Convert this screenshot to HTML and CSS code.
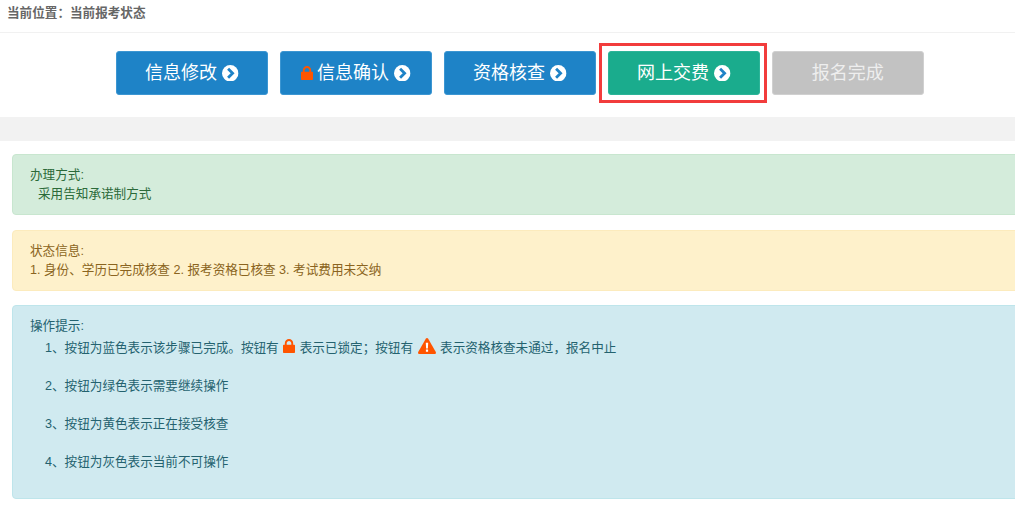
FILE: index.html
```html
<!DOCTYPE html>
<html lang="zh">
<head>
<meta charset="utf-8">
<title>当前报考状态</title>
<link rel="stylesheet" href="styles.css">
</head>
<body>
<svg class="defs" width="0" height="0" aria-hidden="true">
  <symbol id="go" viewBox="0 0 16 16">
    <circle cx="8" cy="8" r="8" fill="#fff"/>
    <path class="chev" d="M5.9 3.6 10.3 8 5.9 12.4" fill="none" stroke-width="2.7"/>
  </symbol>
  <symbol id="lock" viewBox="0 0 12 14">
    <path d="M0 6.4C0 6 .3 5.7.7 5.7H1.8V4.2C1.8 1.9 3.7 0 6 0S10.2 1.9 10.2 4.2V5.7H11.3C11.7 5.7 12 6 12 6.4V13.3C12 13.7 11.7 14 11.3 14H.7C.3 14 0 13.7 0 13.3ZM3.7 5.7H8.3V4.2C8.3 2.9 7.3 1.9 6 1.9S3.7 2.9 3.7 4.2Z" fill="#ff5500" fill-rule="evenodd"/>
  </symbol>
  <symbol id="warn" viewBox="0 0 18 16">
    <path d="M9 0C9.5 0 9.9.3 10.2.7L17.8 14C18.2 14.9 17.7 16 16.6 16H1.4C.3 16-.2 14.9.2 14L7.8.7C8.1.3 8.5 0 9 0Z" fill="#ff5500"/>
    <path d="M7.8 4.8H10.2L9.9 10.4H8.1ZM7.9 11.6H10.1V13.8H7.9Z" fill="#fff"/>
  </symbol>
</svg>

<header class="crumb">当前位置：当前报考状态</header>

<nav class="steps">
  <a class="step step-blue">信息修改<svg class="go"><use href="#go"/></svg></a>
  <a class="step step-blue"><svg class="lock"><use href="#lock"/></svg>信息确认<svg class="go"><use href="#go"/></svg></a>
  <a class="step step-blue">资格核查<svg class="go"><use href="#go"/></svg></a>
  <a class="step step-green step-current">网上交费<svg class="go"><use href="#go"/></svg></a>
  <a class="step step-grey">报名完成</a>
</nav>

<div class="band"></div>

<main class="alerts">
  <section class="alert alert-green">
    <p>办理方式:</p>
    <p class="second indent-small">采用告知承诺制方式</p>
  </section>
  <section class="alert alert-yellow">
    <p>状态信息:</p>
    <p class="second">1. 身份、学历已完成核查 2. 报考资格已核查 3. 考试费用未交纳</p>
  </section>
  <section class="alert alert-blue">
    <p>操作提示:</p>
    <p class="tip tip-first">1、按钮为蓝色表示该步骤已完成。按钮有 <svg class="lock-inline"><use href="#lock"/></svg> 表示已锁定；按钮有 <svg class="warn"><use href="#warn"/></svg> 表示资格核查未通过，报名中止</p>
    <p class="tip">2、按钮为绿色表示需要继续操作</p>
    <p class="tip">3、按钮为黄色表示正在接受核查</p>
    <p class="tip">4、按钮为灰色表示当前不可操作</p>
  </section>
</main>
</body>
</html>
```
FILE: styles.css
```css
* { box-sizing: border-box; }
html, body { margin: 0; padding: 0; height: 100%; overflow: hidden; background: #fff; }
body {
  font-family: "Liberation Sans", "Noto Sans CJK SC", sans-serif;
  font-size: 12.6px;
  line-height: 18px;
  color: #555;
}
p { margin: 0; }
.defs { position: absolute; }

.crumb {
  height: 33px;
  padding: 4px 0 0 7px;
  font-weight: 700;
  color: #666;
  border-bottom: 1px solid #f1f1f1;
}

.steps {
  display: flex;
  gap: 12.5px;
  height: 84px;
  padding: 18px 0 0 116px;
}
.step {
  position: relative;
  display: flex;
  align-items: center;
  justify-content: center;
  width: 151.5px;
  height: 44px;
  border-radius: 3px;
  font-size: 18px;
  color: #fff;
}
.step-blue { background: #1e83c7; border: 1px solid #3c96d2; }
.step-green { background: #1aac8d; border: 1px solid #2cb498; }
.step-grey { background: #c2c2c2; border: 1px solid #d0d0d0; color: #eee; }
.step-current::after {
  content: "";
  position: absolute;
  inset: -9px -8px -9px -10px;
  border: 3px solid #f23c3c;
}
.go { width: 16.5px; height: 16.5px; margin-left: 5px; }
.chev { stroke: #1e83c7; }
.step-green .chev { stroke: #1aac8d; }
.lock { width: 12px; height: 14px; margin: -1px 4px 0 0; }

.band { height: 24px; background: #f2f2f2; }

.alerts {
  display: flex;
  flex-direction: column;
  gap: 15px;
  margin: 13px -20px 0 12px;
}
.alert {
  padding: 11px 17px 0;
  border: 1px solid;
  border-radius: 4px;
}
.alert-green { height: 61px; background: #d4ecdb; border-color: #c8e6cf; color: #2b6a39; }
.alert-yellow { height: 61px; background: #fef1cb; border-color: #fcebbd; color: #8a6420; }
.alert-blue { height: 194px; margin-top: -1px; background: #d0eaf0; border-color: #bee5eb; color: #24626f; }
.second { margin-top: 1px; }
.indent-small { padding-left: 8px; }

.tip { padding-left: 15px; margin-top: 20px; }
.tip-first { margin-top: 4px; margin-bottom: 21px; display: flex; align-items: center; white-space: pre; height: 17px; }
.lock-inline { width: 12px; height: 14px; margin: -4px 1px 0 1px; }
.warn { width: 18px; height: 16px; margin: -4px 1px 0 1px; }
```
